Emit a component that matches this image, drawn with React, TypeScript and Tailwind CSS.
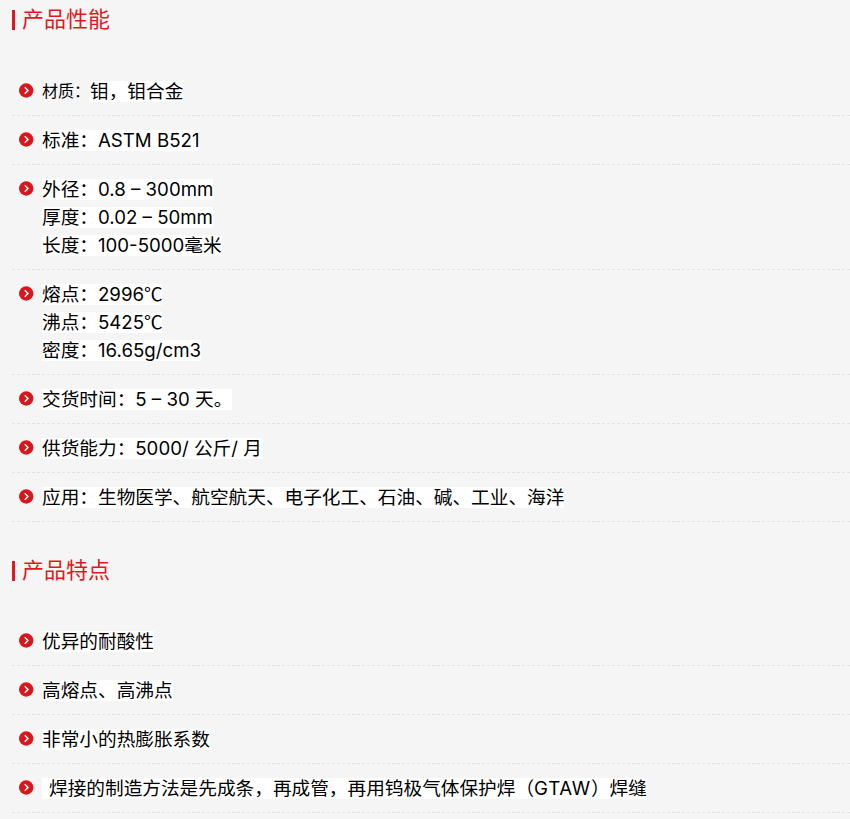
const FONT = "font-['Inter','Noto_Sans_CJK_SC',sans-serif]";

function Bullet() {
  return (
    <svg width="15" height="15" viewBox="0 0 15 15" className="mt-[6px] ml-[7px] mr-[8px] shrink-0">
      <circle cx="7.2" cy="7.5" r="7.2" fill="#d7171c" />
      <path d="M5.8 4.3 L8.9 7.5 L5.8 10.7" fill="none" stroke="#fff" strokeWidth="1.5" />
    </svg>
  );
}

function W({ children }: { children: React.ReactNode }) {
  return <span className="inline-block bg-white leading-[21px] whitespace-pre">{children}</span>;
}

function Deg() {
  return <span className="font-['Noto_Sans_CJK_SC',sans-serif] leading-none tracking-[-1px]">℃</span>;
}

function Row({ lines }: { lines: React.ReactNode[] }) {
  return (
    <li className="flex py-[10px] border-b border-dashed border-[#e3e3e3]">
      <Bullet />
      <div className="flex flex-col text-[18.67px] leading-[28px] text-black">
        {lines.map((l, i) => (
          <div key={i} className="h-[28px] flex items-center">{l}</div>
        ))}
      </div>
    </li>
  );
}

function Title({ children }: { children: React.ReactNode }) {
  return (
    <div className="h-[40px] flex items-center">
      <span className="w-[3px] h-[20px] bg-[#dd1a21] mr-[7px]" />
      <h2 className="text-[22px] font-normal text-[#dd1a21] leading-[38px] mb-[2px]">{children}</h2>
    </div>
  );
}

export default function App() {
  return (
    <div className={`h-[819px] overflow-hidden bg-[#f5f5f5] pl-[12px] ${FONT}`}>
      <Title>产品性能</Title>
      <ul className="mt-[27px]">
        <Row lines={[<><span className="text-[16px]">材质：</span><W>钼，钼合金</W></>]} />
        <Row lines={[<W>标准：ASTM B521</W>]} />
        <Row lines={[<W>外径：0.8 – 300mm</W>, <W>厚度：0.02 – 50mm</W>, <W>长度：100-5000毫米</W>]} />
        <Row lines={[<W>熔点：2996<Deg /></W>, <W>沸点：5425<Deg /></W>, <W>密度：16.65g/cm3</W>]} />
        <Row lines={[<W>交货时间：5 – 30 天。</W>]} />
        <Row lines={[<W>供货能力：5000/ 公斤/ 月</W>]} />
        <Row lines={[<W>应用：生物医学、航空航天、电子化工、石油、碱、工业、海洋</W>]} />
      </ul>
      <div className="mt-[29px]">
        <Title>产品特点</Title>
      </div>
      <ul className="mt-[26px]">
        <Row lines={[<W>优异的耐酸性</W>]} />
        <Row lines={[<W>高熔点、高沸点</W>]} />
        <Row lines={[<W>非常小的热膨胀系数</W>]} />
        <Row lines={[<W><span className="pl-[7px]">焊接的制造方法是先成条，再成管，再用钨极气体保护焊（<span className="tracking-[0.7px]">GTAW</span>）焊缝</span></W>]} />
      </ul>
    </div>
  );
}
